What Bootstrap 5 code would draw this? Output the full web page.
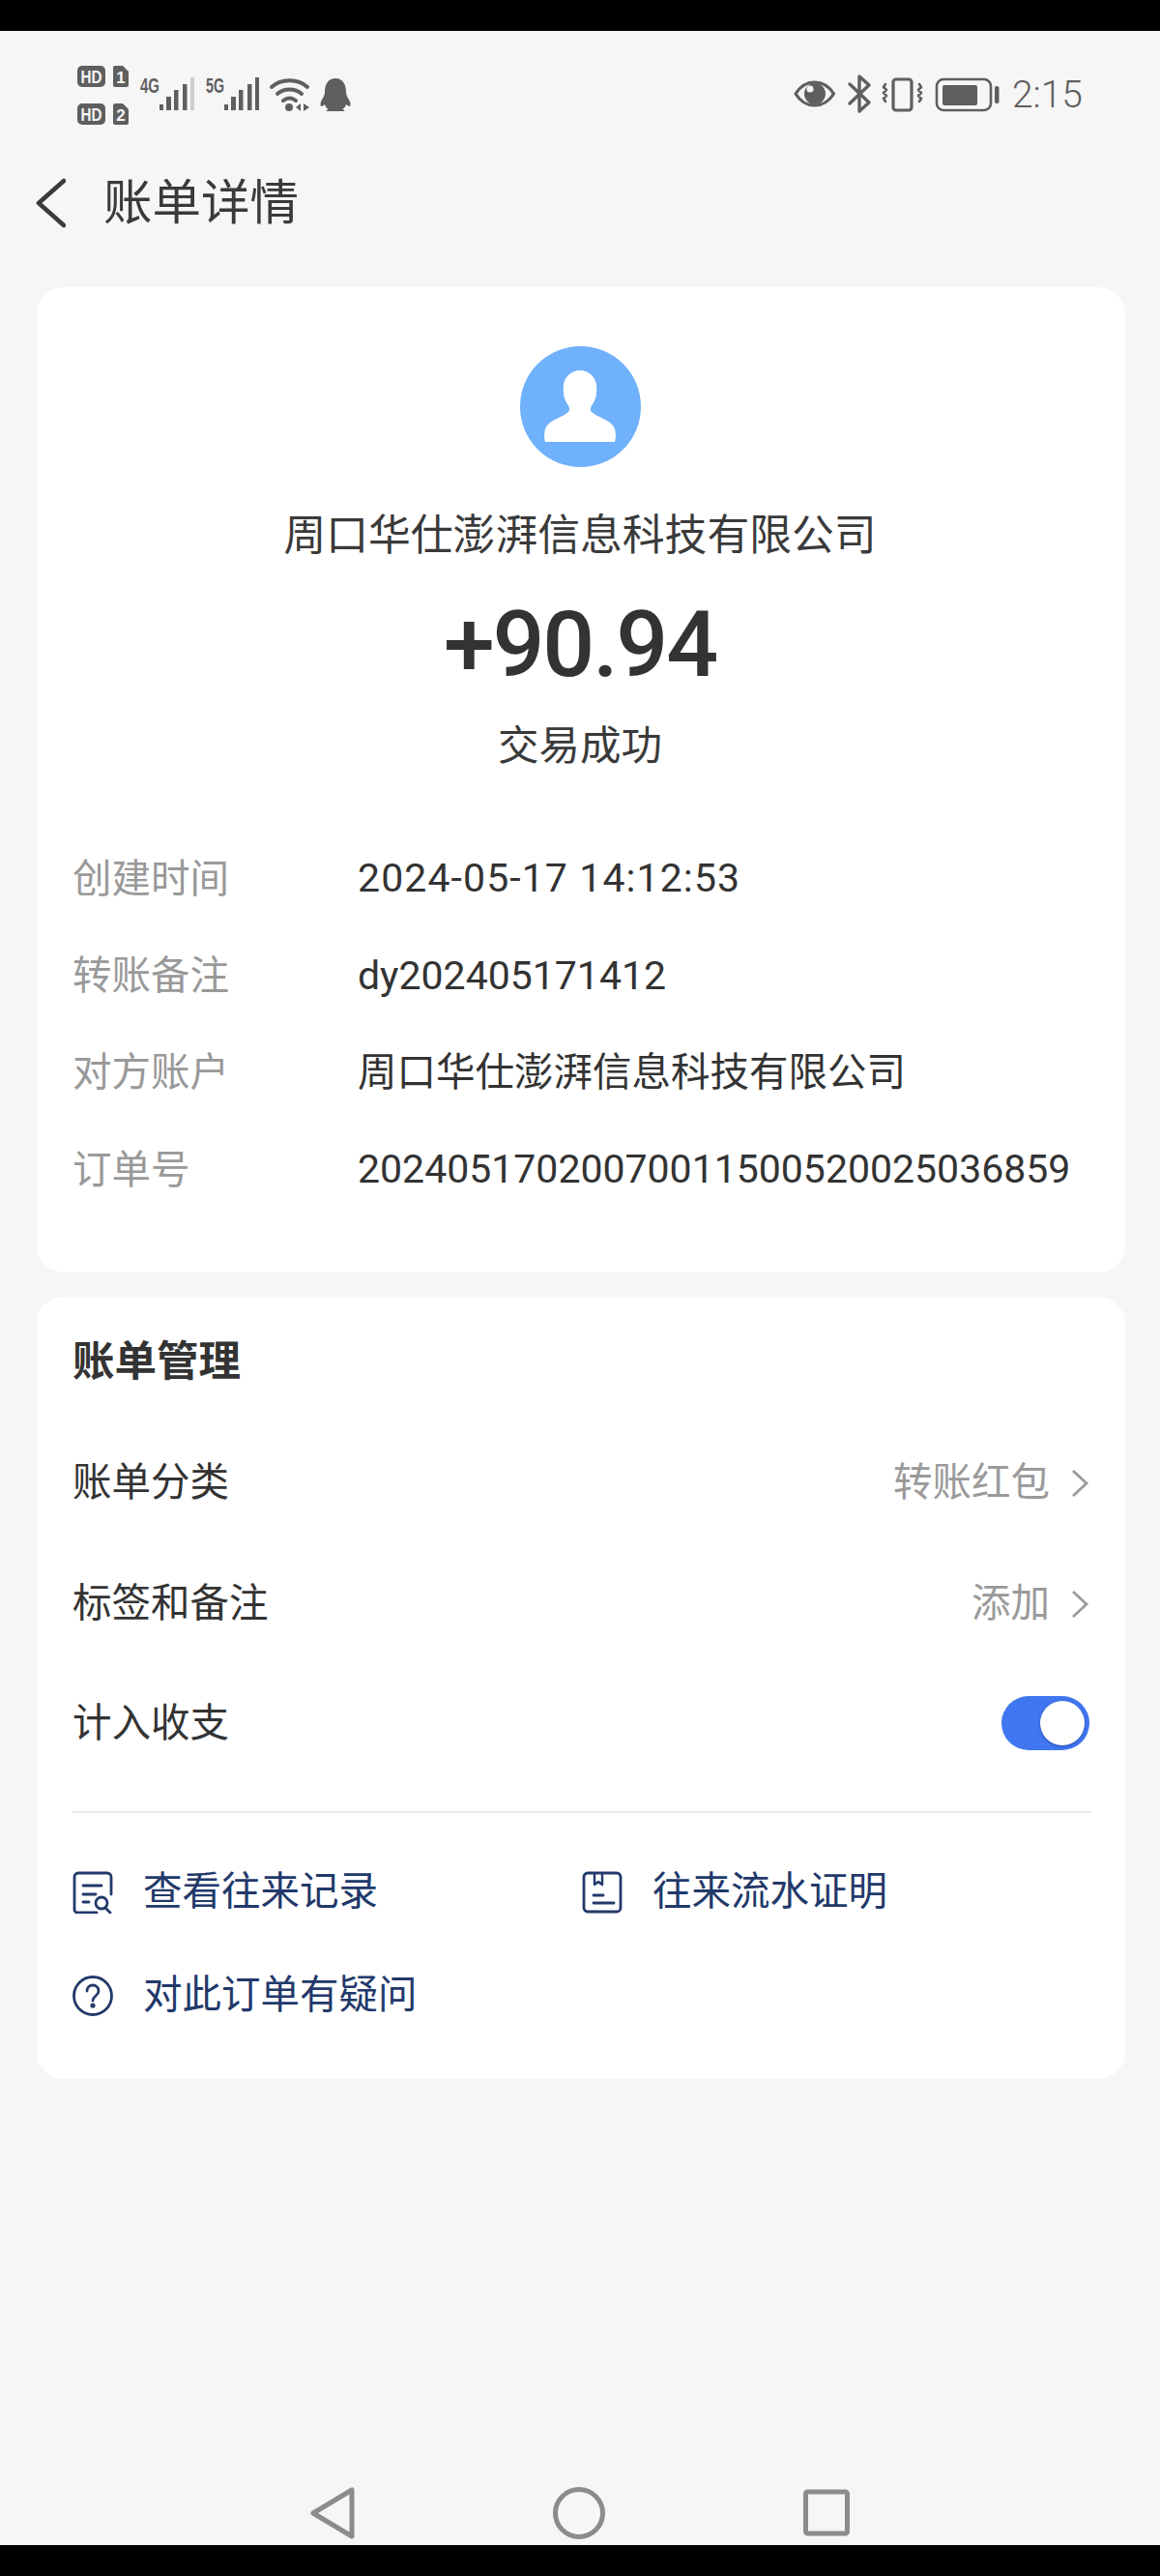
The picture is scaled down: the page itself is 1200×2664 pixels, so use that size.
<!doctype html>
<html lang="zh-CN">
<head>
<meta charset="utf-8">
<title>账单详情</title>
<link href="https://cdn.jsdelivr.net/npm/bootstrap@5.3.0/dist/css/bootstrap.min.css" rel="stylesheet">
<style>
html,body{margin:0;background:#000}
body{font-family:Roboto,"Noto Sans CJK SC",sans-serif;color:#333;width:1200px;height:2664px}
.screen{height:2600px;margin-top:32px;background:#f6f6f6;display:flex;flex-direction:column}
.sbar{height:100px;padding:28px 0 0 78px;flex:none}
.sbar svg{display:block}
.rgrp{margin-top:16px}
.clock{font-size:39px;font-weight:300;color:#5f5f5f;line-height:1;margin:0 80px 0 13px}
.tbar{height:165px;padding:0 0 9px 36px;flex:none}
.ttl{font-size:50.500px;line-height:70px;color:#3a3a3a;margin-left:39px}
.panel{margin:0 36px 0 38px;background:#fff;border:0;border-radius:28px;flex:none}
.p-one{padding:61px 35px 56px 37px}
.p-two{margin-top:25px;padding:38px 35px 33px 37px}
.hero{margin-right:4px}
.ava{width:125px;height:125px;display:block;margin:0 auto}
.co{font-size:43.800px;line-height:60px;margin-top:41px;text-align:center;color:#3a3a3a}
.amt{font-size:95px;line-height:100px;margin-top:33px;font-weight:500;text-align:center;letter-spacing:-2.200px;color:#333}
.st{font-size:42.500px;line-height:60px;margin-top:25px;text-align:center;color:#3a3a3a}
.dl{margin-top:57px}
.dr{height:100.300px}
.dk{width:295px;font-size:40.500px;color:#999}
.dv{font-size:40.500px;color:#333;white-space:nowrap}
.nums{font-size:41px}
.dt{letter-spacing:1.100px}
.hd{font-size:43.500px;line-height:60px;font-weight:700;color:#333}
.mg{margin-top:32px}
.mr{height:125px;font-size:40.500px;color:#333}
.mr-last{height:122px}
.mv{color:#9a9a9a;font-size:40.500px}
.chev{width:20px;height:32px;margin:0 2px 0 21px}
.tog{width:91px;height:56px;background:#4076f0;border-radius:28px;padding:5px;margin-right:2px}
.knob{width:46px;height:46px;background:#fff;border-radius:50%;box-shadow:0 1px 3px rgba(0,0,60,.35)}
.sep{height:2px;background:#e8e8e8;margin:30px 0 28px}
.lk{height:107px;color:#22396a;font-size:40.500px}
.lk svg{width:42px;height:44px;margin-right:31px;flex:none}
.ncv{flex:none;height:62px;padding-left:319px;gap:202px}
.ncv svg{display:block;flex:none}
</style>
</head>
<body>
<div class="screen">
  <div class="sbar d-flex align-items-start justify-content-between">
    <svg width="290" height="70" viewBox="78 60 290 70" fill="#5f5f5f">
      <rect x="80" y="68" width="29" height="22" rx="5"/><text x="94.500" y="85.500" font-family="Liberation Sans" font-size="19" font-weight="700" fill="#f6f6f6" text-anchor="middle" textLength="22" lengthAdjust="spacingAndGlyphs">HD</text>
      <path d="M117 70a2 2 0 0 1 2-2h8l6 6v14a2 2 0 0 1-2 2h-12a2 2 0 0 1-2-2z"/><text x="125" y="85.500" font-family="Liberation Sans" font-size="17" font-weight="700" fill="#f6f6f6" text-anchor="middle">1</text>
      <rect x="80" y="107" width="29" height="22" rx="5"/><text x="94.500" y="124.500" font-family="Liberation Sans" font-size="19" font-weight="700" fill="#f6f6f6" text-anchor="middle" textLength="22" lengthAdjust="spacingAndGlyphs">HD</text>
      <path d="M117 109a2 2 0 0 1 2-2h8l6 6v14a2 2 0 0 1-2 2h-12a2 2 0 0 1-2-2z"/><text x="125" y="124.500" font-family="Liberation Sans" font-size="17" font-weight="700" fill="#f6f6f6" text-anchor="middle">2</text>
      <text x="145" y="96" font-family="Liberation Sans" font-size="22" font-weight="700" textLength="20" lengthAdjust="spacingAndGlyphs">4G</text>
      <text x="213" y="96" font-family="Liberation Sans" font-size="22" font-weight="700" textLength="19" lengthAdjust="spacingAndGlyphs">5G</text>
      <rect x="165" y="108" width="4" height="6"/><rect x="172" y="100" width="5" height="14"/><rect x="180" y="93" width="4.500" height="21"/><rect x="189" y="87" width="4.500" height="27"/><rect x="197" y="80" width="4" height="34" fill="#cfcfcf"/>
      <rect x="232" y="108" width="4" height="6"/><rect x="239" y="100" width="5" height="14"/><rect x="247" y="93" width="4.500" height="21"/><rect x="256" y="87" width="4.500" height="27"/><rect x="264" y="80" width="4" height="34"/>
      <g fill="none" stroke="#5f5f5f" stroke-width="4" stroke-linecap="round"><path d="M281 90c10-9 27-9 37 0"/><path d="M287 97c7-6 18-6 25 0"/><path d="M293 104c4-3 9-3 13 0"/></g>
      <circle cx="299" cy="111" r="4"/><path d="M311 107v8l-5-4zM314 107v8l6-4z"/>
      <path d="M347 81c-8 0-11 7-11 14 0 3-1 5-3 8-2 4-2 7 0 7l3-2c1 3 2 4 4 5-3 1-3 2-1 2h16c2 0 2-1-1-2 2-1 3-2 4-5l3 2c2 0 2-3 0-7-2-3-3-5-3-8 0-7-3-14-11-14z"/>
    </svg>
    <div class="rgrp d-flex align-items-center">
      <svg width="213" height="44" viewBox="822 76 213 44">
        <g fill="none" stroke="#5f5f5f" stroke-width="3.200" stroke-linejoin="round" stroke-linecap="round">
          <path d="M824 97c5-8 12-12 19.500-12s15 4 20 12c-5 8-12.500 12-20 12s-14.500-4-19.500-12z"/>
          <path d="M880 87l20 19-10 9V79l10 9-20 19" stroke-width="3.400"/>
          <rect x="925" y="82" width="19" height="32" rx="3"/>
          <path d="M917 87l-2 3 3 3-3 3 3 3-3 3 2 3M952 87l2 3-3 3 3 3-3 3 3 3-2 3" stroke-width="2.600"/>
          <rect x="970" y="82" width="56" height="32" rx="7" stroke-width="2.600"/>
        </g>
        <circle cx="844" cy="97" r="11" fill="#5f5f5f"/><circle cx="839" cy="92" r="3.500" fill="#f6f6f6"/>
        <rect x="976" y="88" width="36" height="21" rx="2" fill="#5f5f5f"/>
        <rect x="1030" y="89" width="4.500" height="18" rx="2" fill="#5f5f5f"/>
      </svg>
      <span class="clock">2:15</span>
    </div>
  </div>
  <div class="tbar d-flex align-items-center">
    <svg width="32" height="52" viewBox="0 0 32 52" fill="none" stroke="#3a3a3a" stroke-width="4.500" stroke-linecap="round" stroke-linejoin="round"><path d="M30 3L4 26l26 23"/></svg>
    <div class="ttl">账单详情</div>
  </div>

  <section class="card panel p-one">
    <div class="hero">
      <svg class="ava" viewBox="0 0 125 125"><circle cx="62.500" cy="62.500" r="62.500" fill="#6fb1fb"/><path d="M26 99c-1-3-2-12 2-17 4-6 17-9 22-14 2-2 1-5-1-8-3-5-5-10-4-20 1-8 8-15 17-15s16 7 17 15c1 10-1 15-4 20-2 3-3 6-1 8 5 5 18 8 22 14 4 5 3 14 2 17z" fill="#fff"/></svg>
      <div class="co">周口华仕澎湃信息科技有限公司</div>
      <div class="amt">+90.94</div>
      <div class="st">交易成功</div>
    </div>
    <div class="dl">
      <div class="dr d-flex align-items-center"><div class="dk">创建时间</div><div class="dv nums dt">2024-05-17 14:12:53</div></div>
      <div class="dr d-flex align-items-center"><div class="dk">转账备注</div><div class="dv nums">dy202405171412</div></div>
      <div class="dr d-flex align-items-center"><div class="dk">对方账户</div><div class="dv">周口华仕澎湃信息科技有限公司</div></div>
      <div class="dr d-flex align-items-center"><div class="dk">订单号</div><div class="dv nums">20240517020070011500520025036859</div></div>
    </div>
  </section>

  <section class="card panel p-two">
    <div class="hd">账单管理</div>
    <div class="mg">
      <div class="mr d-flex align-items-center justify-content-between"><span>账单分类</span><span class="d-flex align-items-center"><span class="mv">转账红包</span><svg class="chev" viewBox="0 0 20 32" fill="none" stroke="#9a9a9a" stroke-width="2.800"><path d="M3 3l14 13L3 29"/></svg></span></div>
      <div class="mr d-flex align-items-center justify-content-between"><span>标签和备注</span><span class="d-flex align-items-center"><span class="mv">添加</span><svg class="chev" viewBox="0 0 20 32" fill="none" stroke="#9a9a9a" stroke-width="2.800"><path d="M3 3l14 13L3 29"/></svg></span></div>
      <div class="mr mr-last d-flex align-items-center justify-content-between"><span>计入收支</span><span class="tog d-flex justify-content-end"><span class="knob"></span></span></div>
    </div>
    <div class="sep"></div>
    <div class="row g-0">
      <div class="col-6 lk d-flex align-items-center">
        <svg viewBox="0 0 42 44" fill="none" stroke="#22396a" stroke-width="2.800" stroke-linecap="round" stroke-linejoin="round"><path d="M40 24V6a4 4 0 0 0-4-4H6a4 4 0 0 0-4 4v34a3 3 0 0 0 3 3h20"/><path d="M11 15h19M11 24h13M11 32h6"/><circle cx="30" cy="33" r="6"/><path d="M34 38l5 5"/></svg>
        <span>查看往来记录</span>
      </div>
      <div class="col-6 lk d-flex align-items-center">
        <svg viewBox="0 0 42 44" fill="none" stroke="#22396a" stroke-width="2.800" stroke-linecap="round" stroke-linejoin="round"><rect x="2" y="2" width="38" height="40" rx="4"/><path d="M13 3v11l4-3 4 3V3" stroke-width="2.400"/><path d="M12 25h10M12 33h21"/></svg>
        <span>往来流水证明</span>
      </div>
      <div class="col-6 lk d-flex align-items-center">
        <svg viewBox="0 0 42 44" fill="none" stroke="#22396a" stroke-width="2.800" stroke-linecap="round"><circle cx="21" cy="22" r="19.500"/><path d="M15 17c0-4 3-6 6-6s6 2 6 6c0 5-6 5-6 10"/><circle cx="21" cy="32" r="1.200" fill="#22396a"/></svg>
        <span>对此订单有疑问</span>
      </div>
    </div>
  </section>

  <div class="flex-grow-1"></div>
  <div class="ncv d-flex">
    <svg width="50" height="56" viewBox="0 0 50 56" fill="none" stroke="#8c8c8c" stroke-width="5" stroke-linejoin="round"><path d="M5 29L45 5v48z"/></svg>
    <svg width="56" height="56" viewBox="0 0 56 56" fill="none" stroke="#8c8c8c" stroke-width="5"><circle cx="28" cy="29" r="24.500"/></svg>
    <svg width="52" height="56" viewBox="0 0 52 56" fill="none" stroke="#8c8c8c" stroke-width="5" stroke-linejoin="round"><rect x="4.500" y="7" width="43" height="43" rx="2"/></svg>
  </div>
</div>
<script src="https://cdn.jsdelivr.net/npm/bootstrap@5.3.0/dist/js/bootstrap.bundle.min.js"></script>
</body>
</html>
